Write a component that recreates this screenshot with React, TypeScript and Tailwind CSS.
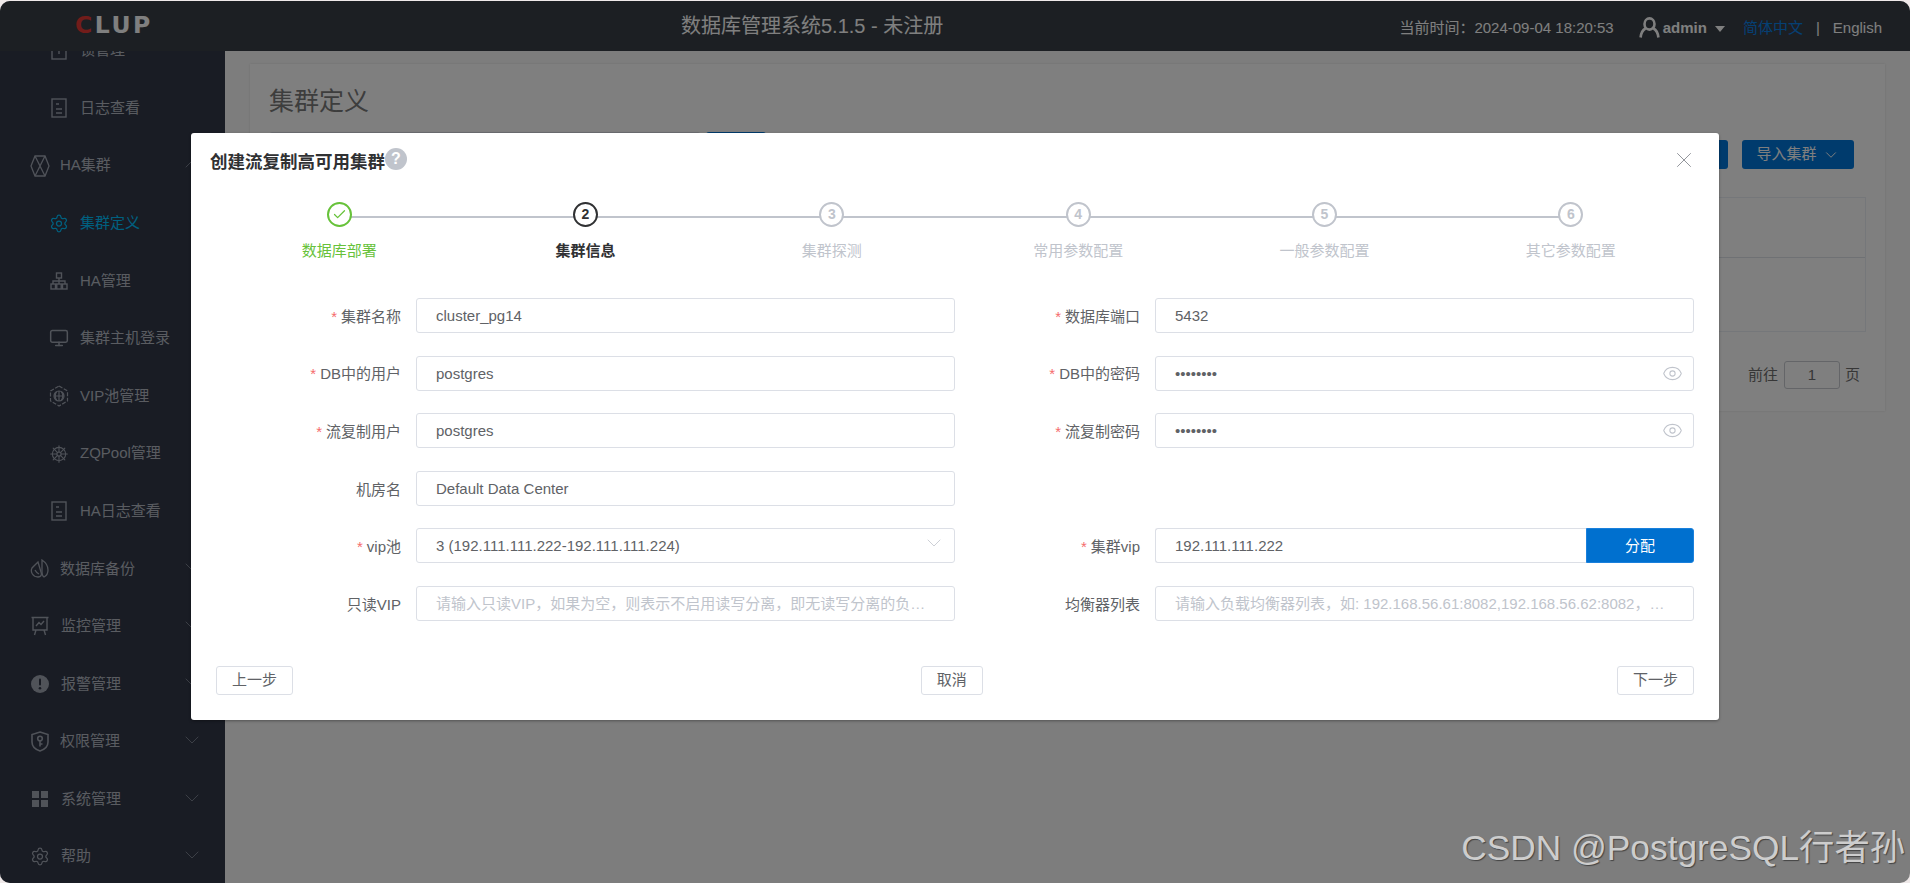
import React from "react";
import { ChevronDown, ChevronUp, Settings, Monitor, ShipWheel, X, Check, Eye } from "lucide-react";

const FF = "[font-family:'Liberation_Sans','Noto_Sans_CJK_SC',sans-serif]";

const DocIcon = () => (
  <svg width="16" height="20" viewBox="0 0 16 20" fill="none" stroke="currentColor" strokeWidth="1.4">
    <rect x="1" y="1" width="14" height="18" />
    <path d="M5 6h3M5 11h6M5 15h6" />
  </svg>
);
const LockBoxIcon = () => (
  <svg width="16" height="20" viewBox="0 0 16 20" fill="none" stroke="currentColor" strokeWidth="1.4">
    <rect x="1" y="1" width="14" height="18" />
    <path d="M8 8v6" />
  </svg>
);
const HexXIcon = () => (
  <svg width="20" height="22" viewBox="0 0 20 22" fill="none" stroke="currentColor" strokeWidth="1.3">
    <path d="M5 1h10l4 10-4 10H5L1 11z" />
    <path d="M5 1l5 10-5 10M15 1l-5 10 5 10" />
  </svg>
);
const TreeIcon = () => (
  <svg width="18" height="18" viewBox="0 0 18 18" fill="none" stroke="currentColor" strokeWidth="1.4">
    <rect x="6.5" y="1" width="5" height="5" />
    <rect x="1" y="12" width="4.5" height="5" />
    <rect x="6.75" y="12" width="4.5" height="5" />
    <rect x="12.5" y="12" width="4.5" height="5" />
    <path d="M9 6v6M3 12V9h12v3" />
  </svg>
);
const VipIcon = () => (
  <svg width="20" height="22" viewBox="0 0 20 22" fill="none" stroke="currentColor" strokeWidth="1.2">
    <path d="M10 1l8.5 5v10L10 21l-8.5-5V6z" strokeDasharray="4 1.5" />
    <circle cx="10" cy="11" r="5" />
    <path d="M5 11h10M10 6v10M7.5 6.8c-1.6 2.6-1.6 5.8 0 8.4M12.5 6.8c1.6 2.6 1.6 5.8 0 8.4" />
  </svg>
);
const BackupIcon = () => (
  <svg width="20" height="20" viewBox="0 0 20 20" fill="none" stroke="currentColor" strokeWidth="1.3">
    <path d="M8 3L2 9c-2 4 1 9 6 9 3 0 4-2 3-5z" />
    <path d="M12 1c3 2 6 5 6 10 0 4-2 6-4 7-2-1-2-4-2-6z" />
    <path d="M5 11c1 2 2 3 4 4" />
  </svg>
);
const BoardIcon = () => (
  <svg width="18" height="20" viewBox="0 0 18 20" fill="none" stroke="currentColor" strokeWidth="1.4">
    <path d="M0.5 1.5h17M2 1.5V14h14V1.5M5 14l-1.5 5M13 14l1.5 5M5 10l3-3.5 2 2 3-3.5" />
  </svg>
);
const AlarmIcon = () => (
  <svg width="18" height="18" viewBox="0 0 18 18">
    <circle cx="9" cy="9" r="9" fill="currentColor" />
    <rect x="8" y="3.5" width="2" height="7" rx="1" fill="#323848" />
    <circle cx="9" cy="13.2" r="1.3" fill="#323848" />
  </svg>
);
const ShieldIcon = () => (
  <svg width="18" height="21" viewBox="0 0 18 21" fill="none" stroke="currentColor" strokeWidth="1.6">
    <path d="M9 1l8 2.5V11c0 4.5-3.5 7.5-8 9-4.500-1.500-8-4.500-8-9V3.500z" />
    <circle cx="9" cy="7.500" r="2.300" />
    <path d="M9 10v5.500M9 13h2.500" />
  </svg>
);
const GridIcon = () => (
  <svg width="16" height="16" viewBox="0 0 16 16" fill="currentColor">
    <rect x="0" y="0" width="7" height="7" />
    <rect x="9" y="0" width="7" height="7" />
    <rect x="0" y="9" width="7" height="7" />
    <rect x="9" y="9" width="7" height="7" />
  </svg>
);
const AdminIcon = () => (
  <svg width="21" height="21" viewBox="0 0 21 21" fill="none" stroke="currentColor" strokeWidth="2.6" className="mb-[3px]">
    <ellipse cx="10.5" cy="7" rx="5" ry="5.6" />
    <path d="M6.500 11.500C3.500 13 2 16.500 1.600 20.500M14.500 11.500c3 1.500 4.500 5 4.900 9" />
  </svg>
);

type NavItem = { label: string; icon: React.ReactNode; sub?: boolean; active?: boolean; arrow?: "up" | "down"; wide?: boolean };
const nav: NavItem[] = [
  { label: "锁管理", icon: <LockBoxIcon />, sub: true },
  { label: "日志查看", icon: <DocIcon />, sub: true },
  { label: "HA集群", icon: <HexXIcon />, arrow: "up" },
  { label: "集群定义", icon: <Settings size={21} strokeWidth={1.5} />, sub: true, active: true },
  { label: "HA管理", icon: <TreeIcon />, sub: true },
  { label: "集群主机登录", icon: <Monitor size={20} strokeWidth={1.8} />, sub: true },
  { label: "VIP池管理", icon: <VipIcon />, sub: true },
  { label: "ZQPool管理", icon: <ShipWheel size={22} strokeWidth={1.3} />, sub: true },
  { label: "HA日志查看", icon: <DocIcon />, sub: true },
  { label: "数据库备份", icon: <BackupIcon />, arrow: "down" },
  { label: "监控管理", icon: <BoardIcon />, arrow: "down", wide: true },
  { label: "报警管理", icon: <AlarmIcon />, arrow: "down", wide: true },
  { label: "权限管理", icon: <ShieldIcon />, arrow: "down" },
  { label: "系统管理", icon: <GridIcon />, arrow: "down", wide: true },
  { label: "帮助", icon: <Settings size={21} strokeWidth={1.5} />, arrow: "down", wide: true },
];

function SideItem({ item }: { item: NavItem }) {
  return (
    <div className={`flex h-[57.6px] shrink-0 items-center ${item.sub ? "pl-[49px]" : "pl-[30px]"} ${item.active ? "text-[#00c0ff]" : "text-[#b4b8c3]"}`}>
      <span className={`flex w-[20px] justify-center ${item.active ? "" : "text-[#a0a6b3]"}`}>{item.icon}</span>
      <span className={`text-[15px] whitespace-nowrap ${item.sub || item.wide ? "ml-[11px]" : "ml-[10px]"}`}>{item.label}</span>
      {item.arrow === "down" && <ChevronDown size={24} strokeWidth={0.8} className="mb-[3px] ml-auto mr-[21px] text-[#8a90a0]" />}
      {item.arrow === "up" && <ChevronUp size={24} strokeWidth={0.8} className="mb-[3px] ml-auto mr-[21px] text-[#8a90a0]" />}
    </div>
  );
}

function Label({ text, required }: { text: string; required?: boolean }) {
  return (
    <div className="flex h-[35px] w-[200px] shrink-0 items-center justify-end pr-[15px] pt-[3px] text-[15px] text-[#606266]">
      {required && <span className="mr-[4px] text-[#f56c6c]">*</span>}
      <span className="whitespace-nowrap">{text}</span>
    </div>
  );
}

function Field({
  label,
  required,
  value,
  placeholder,
  type = "text",
  trailing,
  button,
}: {
  label: string;
  required?: boolean;
  value?: string;
  placeholder?: string;
  type?: string;
  trailing?: React.ReactNode;
  button?: string;
}) {
  return (
    <div className="flex h-[35px]">
      <Label text={label} required={required} />
      <div className={`flex min-w-0 flex-1 items-center border border-[#dcdfe6] bg-white pl-[19px] ${button ? "rounded-l-[3px] border-r-0" : trailing ? "rounded-[3px] pr-[10px]" : "rounded-[3px] pr-[19px]"}`}>
        <input
          readOnly
          type={type}
          value={value}
          placeholder={placeholder}
          className="h-full min-w-0 flex-1 bg-transparent text-[15px] text-[#606266] outline-none placeholder:text-[#c0c4cc] text-ellipsis"
        />
        {trailing}
      </div>
      {button && (
        <button className="h-[35px] w-[108px] shrink-0 rounded-r-[3px] border border-[#1a80dc] bg-[#0070cf] text-[15px] text-white">
          {button}
        </button>
      )}
    </div>
  );
}

const steps = ["数据库部署", "集群信息", "集群探测", "常用参数配置", "一般参数配置", "其它参数配置"];

function Step({ idx, title }: { idx: number; title: string }) {
  const state = idx === 0 ? "done" : idx === 1 ? "current" : "wait";
  const color = state === "done" ? "#67c23a" : state === "current" ? "#303133" : "#c0c4cc";
  return (
    <div className="relative flex flex-col items-center">
      {idx < 5 && <div className="absolute left-1/2 top-[14px] h-[2px] w-full bg-[#c0c4cc]" />}
      <div
        className={`relative flex h-[25px] w-[25px] items-center justify-center rounded-full border-2 bg-white text-[14px] font-bold ${
          state === "done" ? "border-[#67c23a] text-[#67c23a]" : state === "current" ? "border-[#303133] text-[#303133]" : "border-[#c0c4cc] text-[#c0c4cc]"
        }`}
      >
        {state === "done" ? <Check size={15} strokeWidth={2} /> : idx + 1}
      </div>
      <div className={`mt-[14px] text-[15px] leading-[20px] ${state === "current" ? "font-bold" : ""}`} style={{ color }}>
        {title}
      </div>
    </div>
  );
}

export default function App() {
  return (
    <div className={`h-[883px] w-full overflow-hidden bg-[#efe9e9] pt-px ${FF}`}>
      <div className="relative flex h-[882px] flex-col overflow-hidden rounded-[10px]">
        {/* top bar */}
        <header className="flex h-[50px] shrink-0 items-center bg-[#383e46] text-white">
          <div className="w-[75px] shrink-0" />
          <div className="mb-[1px] w-[606px] shrink-0 whitespace-nowrap [font-family:'DejaVu_Sans',sans-serif] text-[23.500px] font-bold leading-none tracking-[2.5px]">
            <span className="text-[#e53935]">C</span>
            <span>LUP</span>
          </div>
          <div className="mb-[1px] text-[20px] whitespace-nowrap">数据库管理系统5.1.5 - 未注册</div>
          <div className="ml-auto flex items-center whitespace-nowrap pr-[28px] pt-[5px] text-[15px]">
            <span>当前时间：2024-09-04 18:20:53</span>
            <span className="ml-[25px]"><AdminIcon /></span>
            <span className="ml-[3px] font-bold">admin</span>
            <span className="ml-[8px] h-0 w-0 border-x-[5px] border-t-[6px] border-x-transparent border-t-white" />
            <span className="ml-[18px] text-[#0a80e6]">简体中文</span>
            <span className="mx-[13px]">|</span>
            <span>English</span>
          </div>
        </header>

        <div className="flex min-h-0 flex-1">
          {/* sidebar */}
          <aside className="w-[225px] shrink-0 overflow-hidden bg-[#323848]">
            <div className="-mt-[29.400px] flex flex-col">
              {nav.map((n) => (
                <SideItem key={n.label} item={n} />
              ))}
            </div>
          </aside>

          {/* page */}
          <main className="min-w-0 flex-1 bg-[#fafafa] pl-[25px] pr-[25px] pt-[13px]">
            <div className="h-[347px] bg-white px-[19px] shadow-[0_0_2px_rgba(0,0,0,0.12)]">
              <div className="flex h-[68px] items-center pt-[8px] text-[25px] text-[#7a7a7a]">集群定义</div>
              <div className="flex h-[65px] items-start">
                <div className="h-[36px] w-[432px] rounded-[3px] border border-[#dcdfe6]" />
                <div className="ml-[5px] h-[36px] w-[60px] rounded-[3px] bg-[#0076da]" />
                <div className="ml-auto mr-[12px] mt-[8px] flex">
                  <div className="h-[29px] w-[100px] rounded-[3px] bg-[#0076da]" />
                  <div className="ml-[14px] flex h-[29px] w-[112px] items-center justify-center rounded-[3px] bg-[#0076da] text-[15px] text-white">
                    导入集群
                    <ChevronDown size={18} strokeWidth={1.3} className="ml-[5px]" />
                  </div>
                </div>
              </div>
              <div className="h-[135px] border border-[#ebeef5]">
                <div className="h-[60px] border-b border-[#dfe2e8]" />
              </div>
              <div className="mr-[6px] mt-[29px] flex h-[28px] items-center justify-end text-[15px] text-[#6e6e6e]">
                前往
                <div className="ml-[6px] mr-[5px] flex h-[28px] w-[56px] items-center justify-center rounded-[3px] border border-[#c8cad0]">1</div>
                页
              </div>
            </div>
          </main>
        </div>

        {/* watermark */}
        <div className="absolute bottom-[10px] right-[5px] z-20 text-[35.300px] leading-[50px] text-[#cdcdcd] [text-shadow:1px_1px_1px_#444]">
          CSDN @PostgreSQL行者孙
        </div>

        {/* modal */}
        <div className="absolute inset-0 z-10 flex justify-center bg-black/50 pt-[132px]">
          <div className="h-[587px] w-[1528px] rounded-[3px] bg-white shadow-[0_1px_3px_rgba(0,0,0,0.35)]">
            <div className="flex h-[58px] items-center pl-[19px] pr-[22px]">
              <span className="text-[17.500px] font-bold text-[#303133]">创建流复制高可用集群</span>
              <span className="mb-[7px] flex h-[22px] w-[22px] items-center justify-center rounded-full bg-[#c0c4cc] text-[16px] font-bold text-white">?</span>
              <X size={26} strokeWidth={0.9} className="mb-[4px] ml-auto text-[#909399]" />
            </div>
            <div className="grid grid-cols-6 px-[25px] pt-[11px]">
              {steps.map((s, i) => (
                <Step key={s} idx={i} title={s} />
              ))}
            </div>
            <div className="mt-[37px] grid grid-cols-2 gap-y-[22.600px] px-[25px]">
              <Field label="集群名称" required value="cluster_pg14" />
              <Field label="数据库端口" required value="5432" />
              <Field label="DB中的用户" required value="postgres" />
              <Field label="DB中的密码" required value="abcdefgh" type="password" trailing={<Eye size={21} strokeWidth={1.2} className="text-[#c0c4cc]" />} />
              <Field label="流复制用户" required value="postgres" />
              <Field label="流复制密码" required value="abcdefgh" type="password" trailing={<Eye size={21} strokeWidth={1.2} className="text-[#c0c4cc]" />} />
              <Field label="机房名" value="Default Data Center" />
              <div />
              <Field label="vip池" required value="3 (192.111.111.222-192.111.111.224)" trailing={<ChevronDown size={24} strokeWidth={0.8} className="mb-[5px] -mr-[2px] text-[#c0c4cc]" />} />
              <Field label="集群vip" required value="192.111.111.222" button="分配" />
              <Field label="只读VIP" placeholder="请输入只读VIP，如果为空，则表示不启用读写分离，即无读写分离的负载均衡器" />
              <Field label="均衡器列表" placeholder="请输入负载均衡器列表，如: 192.168.56.61:8082,192.168.56.62:8082，多个用逗号分隔" />
            </div>
            <div className="mt-[45px] flex justify-between px-[25px]">
              <button className="h-[29px] w-[77px] rounded-[3px] border border-[#dcdfe6] text-[15px] text-[#606266]">上一步</button>
              <button className="mr-[6.500px] h-[29px] w-[62px] rounded-[3px] border border-[#dcdfe6] text-[15px] text-[#606266]">取消</button>
              <button className="h-[29px] w-[77px] rounded-[3px] border border-[#dcdfe6] text-[15px] text-[#606266]">下一步</button>
            </div>
          </div>
        </div>
      </div>
    </div>
  );
}
